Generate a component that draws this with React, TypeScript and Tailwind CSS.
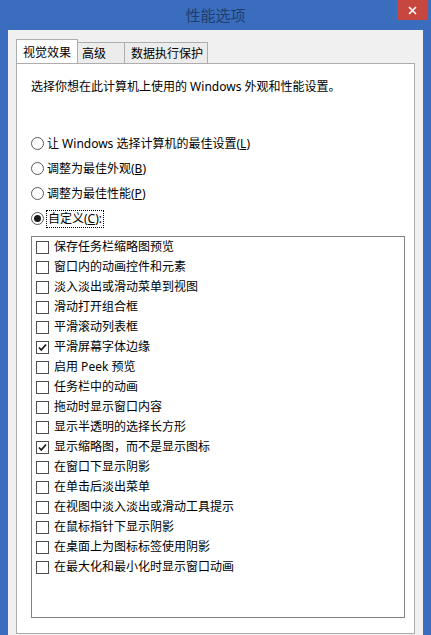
import React from 'react';

const OPTIONS = [
  { label: '保存任务栏缩略图预览', checked: false },
  { label: '窗口内的动画控件和元素', checked: false },
  { label: '淡入淡出或滑动菜单到视图', checked: false },
  { label: '滑动打开组合框', checked: false },
  { label: '平滑滚动列表框', checked: false },
  { label: '平滑屏幕字体边缘', checked: true },
  { label: '启用 Peek 预览', checked: false },
  { label: '任务栏中的动画', checked: false },
  { label: '拖动时显示窗口内容', checked: false },
  { label: '显示半透明的选择长方形', checked: false },
  { label: '显示缩略图，而不是显示图标', checked: true },
  { label: '在窗口下显示阴影', checked: false },
  { label: '在单击后淡出菜单', checked: false },
  { label: '在视图中淡入淡出或滑动工具提示', checked: false },
  { label: '在鼠标指针下显示阴影', checked: false },
  { label: '在桌面上为图标标签使用阴影', checked: false },
  { label: '在最大化和最小化时显示窗口动画', checked: false },
];

const Radio = ({ checked, children }: { checked?: boolean; children: React.ReactNode }) => (
  <div className="h-[25px] flex items-center">
    <span className="w-[13px] h-[13px] rounded-full border border-[#5a5a5a] bg-white flex items-center justify-center shrink-0">
      {checked && <span className="w-[7px] h-[7px] rounded-full bg-[#1a1a1a]" />}
    </span>
    {children}
  </div>
);

const Check = ({ checked, label }: { checked: boolean; label: string }) => (
  <div className="h-[20px] flex items-center pl-[4px]">
    <span className="w-[13px] h-[13px] border border-[#4d4d4d] bg-white flex items-center justify-center shrink-0">
      {checked && (
        <svg width="11" height="11" viewBox="0 0 11 11">
          <path d="M2 5.5 L4.3 8 L9 2.5" fill="none" stroke="#1a1a1a" strokeWidth="1.8" />
        </svg>
      )}
    </span>
    <span className="ml-[5px]">{label}</span>
  </div>
);

export default function App() {
  return (
    <div className="w-[431px] h-[635px] bg-[#3b6dbf] flex flex-col overflow-hidden text-[12px] leading-[16px] text-black font-['Noto_Sans','Noto_Sans_CJK_SC',sans-serif]">
      {/* Title bar */}
      <div className="h-[30px] relative shrink-0">
        <div className="pt-[6px] text-center text-[15px] leading-[18px] text-[#1f3d6d]">性能选项</div>
        <div className="absolute top-0 right-[3px] w-[31px] h-[20px] bg-[#c7463f] flex items-center justify-center">
          <svg width="9" height="9" viewBox="0 0 9 9">
            <path d="M1 1 L8 8 M8 1 L1 8" stroke="#ffffff" strokeWidth="1.6" />
          </svg>
        </div>
      </div>

      {/* Dialog body */}
      <div className="flex-1 mx-[8px] bg-[#f0f0f0] flex flex-col pt-[10px] px-[8px] pb-[1px]">
        {/* Tabs */}
        <div className="flex items-end h-[23px] relative z-10">
          <div className="h-[24px] w-[62px] bg-white border border-b-0 border-[#adadad] pl-[6px] pt-[5px]">视觉效果</div>
          <div className="h-[21px] w-[47px] bg-[#ececec] border border-l-0 border-b-0 border-[#adadad] pl-[4px] pt-[3px]">高级</div>
          <div className="h-[21px] w-[83px] bg-[#ececec] border border-l-0 border-b-0 border-[#adadad] pl-[6px] pt-[3px]">数据执行保护</div>
        </div>

        {/* Panel */}
        <div className="flex-1 bg-white border border-[#adadad] pl-[14px] pt-[15px]">
          <div className="h-[16px]">选择你想在此计算机上使用的 Windows 外观和性能设置。</div>

          <div className="mt-[36px]">
            <Radio>
              <span className="ml-[3px]">让 Windows 选择计算机的最佳设置(<span className="underline">L</span>)</span>
            </Radio>
            <Radio>
              <span className="ml-[3px]">调整为最佳外观(<span className="underline">B</span>)</span>
            </Radio>
            <Radio>
              <span className="ml-[3px]">调整为最佳性能(<span className="underline">P</span>)</span>
            </Radio>
            <Radio checked>
              <span className="ml-[2px] px-[1px] border border-dotted border-black">自定义(<span className="underline">C</span>):</span>
            </Radio>
          </div>

          <div className="mt-[5px] w-[374px] h-[382px] border border-[#828282]">
            {OPTIONS.map((o) => (
              <Check key={o.label} checked={o.checked} label={o.label} />
            ))}
          </div>
        </div>
      </div>
    </div>
  );
}
